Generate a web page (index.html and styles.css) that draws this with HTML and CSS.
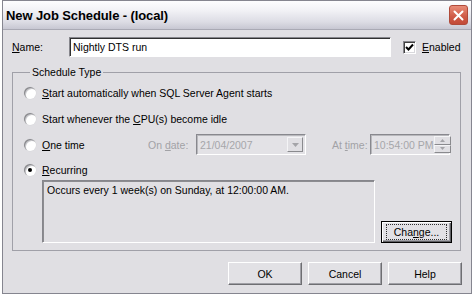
FILE: index.html
```html
<!DOCTYPE html>
<html>
<head>
<meta charset="utf-8">
<link rel="stylesheet" href="styles.css">
</head>
<body>
<div class="window">
  <div class="titlebar">
    <span class="title">New Job Schedule - (local)</span>
    <span class="close">
      <svg width="11" height="11" viewBox="0 0 11 11"><path d="M1.5 1.5 L9.5 9.5 M9.5 1.5 L1.5 9.5" stroke="#fff" stroke-width="2" stroke-linecap="round"/></svg>
    </span>
  </div>
  <div class="content">
    <div class="name-row">
      <span class="name-label"><u>N</u>ame:</span>
      <div class="textbox">Nightly DTS run</div>
      <div class="check">
        <span class="checkbox"><svg width="9" height="9" viewBox="0 0 9 9"><path d="M1 4 L3.5 6.5 L8 1.5" fill="none" stroke="#000" stroke-width="2"/></svg></span>
        <span><u>E</u>nabled</span>
      </div>
    </div>
    <fieldset class="group">
      <legend>Schedule Type</legend>
      <div class="radio-row"><span class="radio"></span><span><u>S</u>tart automatically when SQL Server Agent starts</span></div>
      <div class="radio-row"><span class="radio"></span><span>Start whenever the <u>C</u>PU(s) become idle</span></div>
      <div class="radio-row">
        <span class="radio"></span><span class="onetime"><u>O</u>ne time</span>
        <span class="dis-label date-label">On <u>d</u>ate:</span>
        <div class="combo"><span class="combo-text">21/04/2007</span><span class="drop"><svg width="7" height="4" viewBox="0 0 7 4"><path d="M0 0 H7 L3.5 4 Z" fill="#a4a4a8"/></svg></span></div>
        <span class="dis-label time-label">At <u>t</u>ime:</span>
        <div class="combo timebox"><span class="combo-text">10:54:00 PM</span><span class="spin"><span class="spin-btn"><svg width="5" height="3" viewBox="0 0 5 3"><path d="M0 3 H5 L2.5 0 Z" fill="#a4a4a8"/></svg></span><span class="spin-btn"><svg width="5" height="3" viewBox="0 0 5 3"><path d="M0 0 H5 L2.5 3 Z" fill="#a4a4a8"/></svg></span></span></div>
      </div>
      <div class="radio-row last"><span class="radio checked"></span><span><u>R</u>ecurring</span></div>
      <div class="recurring">
        <div class="desc">Occurs every 1 week(s) on Sunday, at 12:00:00 AM.</div>
        <div class="btn default"><span class="focus">Cha<u>n</u>ge...</span></div>
      </div>
    </fieldset>
    <div class="buttons">
      <div class="btn">OK</div>
      <div class="btn">Cancel</div>
      <div class="btn">Help</div>
    </div>
  </div>
</div>
</body>
</html>
```
FILE: styles.css
```css
html, body {
  margin: 0;
  padding: 0;
  background: #ffffff;
}
body {
  font-family: "Liberation Sans", Arial, sans-serif;
  font-size: 10.5px;
  color: #000;
}
u { text-decoration: underline; text-underline-offset: 1px; }

.window {
  margin-left: 2px;
  width: 470px;
  height: 294px;
  box-sizing: border-box;
  border: 1px solid #85858f;
  background: #e0dfe3;
  display: flex;
  flex-direction: column;
}

.titlebar {
  height: 28px;
  border-bottom: 1px solid #a9a9b4;
  background: linear-gradient(#fdfdfe 0%, #f1f1f5 35%, #dcdce4 75%, #c7c7d2 100%);
  display: flex;
  align-items: center;
  justify-content: space-between;
  padding: 0 3px 0 3px;
}
.title {
  font-weight: bold;
  font-size: 13px;
  letter-spacing: -0.1px;
  color: #000;
  margin-top: 1px;
}
.close {
  width: 19px;
  height: 20px;
  box-sizing: border-box;
  border: 1px solid #b04a3a;
  border-radius: 3px;
  background: linear-gradient(#e88c78, #cf5a46 60%, #c24a38);
  display: flex;
  align-items: center;
  justify-content: center;
}

.content {
  padding: 7px 9px 0 9px;
  display: flex;
  flex-direction: column;
}

.name-row {
  display: flex;
  align-items: center;
  height: 20px;
}
.name-label { width: 57px; flex: none; }
.textbox {
  width: 322px;
  height: 20px;
  flex: none;
  box-sizing: border-box;
  background: #fff;
  border: 1px solid;
  border-color: #86868c #ffffff #ffffff #86868c;
  box-shadow: inset 1px 1px 0 #303030;
  padding: 0 3px;
  display: flex;
  align-items: center;
}
.check {
  display: flex;
  align-items: center;
  gap: 6px;
  margin-left: 12px;
}
.checkbox {
  width: 13px;
  height: 13px;
  box-sizing: border-box;
  background: #fff;
  border: 1px solid;
  border-color: #86868c #ffffff #ffffff #86868c;
  box-shadow: inset 1px 1px 0 #404040, inset -1px -1px 0 #d8d8dc;
  display: flex;
  align-items: center;
  justify-content: center;
}

.group {
  margin: 9px 0 0 0;
  padding: 3px 8px 7px 11px;
  border: 1px solid #a0a0a8;
  min-inline-size: 0;
  width: 449px;
  box-sizing: border-box;
  height: 185px;
}
.group legend {
  padding: 0 2px;
  margin-left: 6px;
  line-height: 13px;
}

.radio-row {
  display: flex;
  align-items: center;
  height: 21px;
  margin-bottom: 5px;
  gap: 6px;
  white-space: nowrap;
}
.radio-row.last {
  height: 19px;
  margin-bottom: 1px;
}
.radio {
  width: 12px;
  height: 12px;
  border-radius: 50%;
  background: #fff;
  box-sizing: border-box;
  box-shadow: inset 1px 1px 0 #8a8a8e, inset 2px 2px 0 #c8c8cc, 0 0 0 0.5px #d8d8dc;
  position: relative;
  flex: none;
}
.radio.checked::after {
  content: "";
  position: absolute;
  left: 4px;
  top: 4px;
  width: 4px;
  height: 4px;
  border-radius: 50%;
  background: #000;
}
.onetime { width: 100px; flex: none; }
.dis-label { color: #a2a2a6; flex: none; }
.date-label { width: 42px; }
.time-label { width: 32px; margin-left: 20px; }

.combo {
  width: 110px;
  height: 21px;
  flex: none;
  box-sizing: border-box;
  background: #e3e2e6;
  border: 1px solid;
  border-color: #88888e #ffffff #ffffff #88888e;
  box-shadow: inset 1px 1px 0 #b8b8bc;
  display: flex;
  align-items: center;
  justify-content: space-between;
  padding: 0 2px 0 3px;
  color: #a6a6aa;
  white-space: nowrap;
}
.combo-text { margin-top: 1px; }
.drop {
  width: 16px;
  height: 15px;
  box-sizing: border-box;
  border: 1px solid;
  border-color: #f4f4f6 #8a8a8e #8a8a8e #f4f4f6;
  background: #e0dfe3;
  display: flex;
  align-items: center;
  justify-content: center;
}
.timebox { width: 80px; padding-right: 1px; }
.spin {
  display: flex;
  flex-direction: column;
  width: 17px;
  height: 17px;
  flex: none;
}
.spin-btn {
  flex: 1;
  box-sizing: border-box;
  border: 1px solid;
  border-color: #f4f4f6 #8a8a8e #8a8a8e #f4f4f6;
  background: #e0dfe3;
  display: flex;
  align-items: center;
  justify-content: center;
}

.recurring {
  display: flex;
  align-items: flex-end;
  gap: 6px;
  margin-left: 18px;
}
.desc {
  width: 333px;
  height: 63px;
  flex: none;
  box-sizing: border-box;
  border: 1px solid;
  border-color: #86868c #ffffff #ffffff #86868c;
  box-shadow: inset 1px 1px 0 #8c8c90;
  padding: 3px 4px;
  background: #e0dfe3;
}

.btn {
  width: 74px;
  height: 22px;
  flex: none;
  box-sizing: border-box;
  border: 1px solid;
  border-color: #ffffff #6e6e72 #6e6e72 #ffffff;
  box-shadow: inset -1px -1px 0 #a0a0a6;
  background: #e2e1e5;
  display: flex;
  align-items: center;
  justify-content: center;
}
.btn.default {
  width: 71px;
  border: 1px solid #000;
  box-shadow: inset 1px 1px 0 #fff, inset -1px -1px 0 #606064, inset -2px -2px 0 #a0a0a6;
}
.focus {
  border: 1px dotted #303030;
  width: 59px;
  height: 14px;
  display: flex;
  align-items: center;
  justify-content: center;
}

.buttons {
  display: flex;
  justify-content: flex-end;
  gap: 6px;
  margin-top: 11px;
}
.buttons .btn { height: 23px; }
```
